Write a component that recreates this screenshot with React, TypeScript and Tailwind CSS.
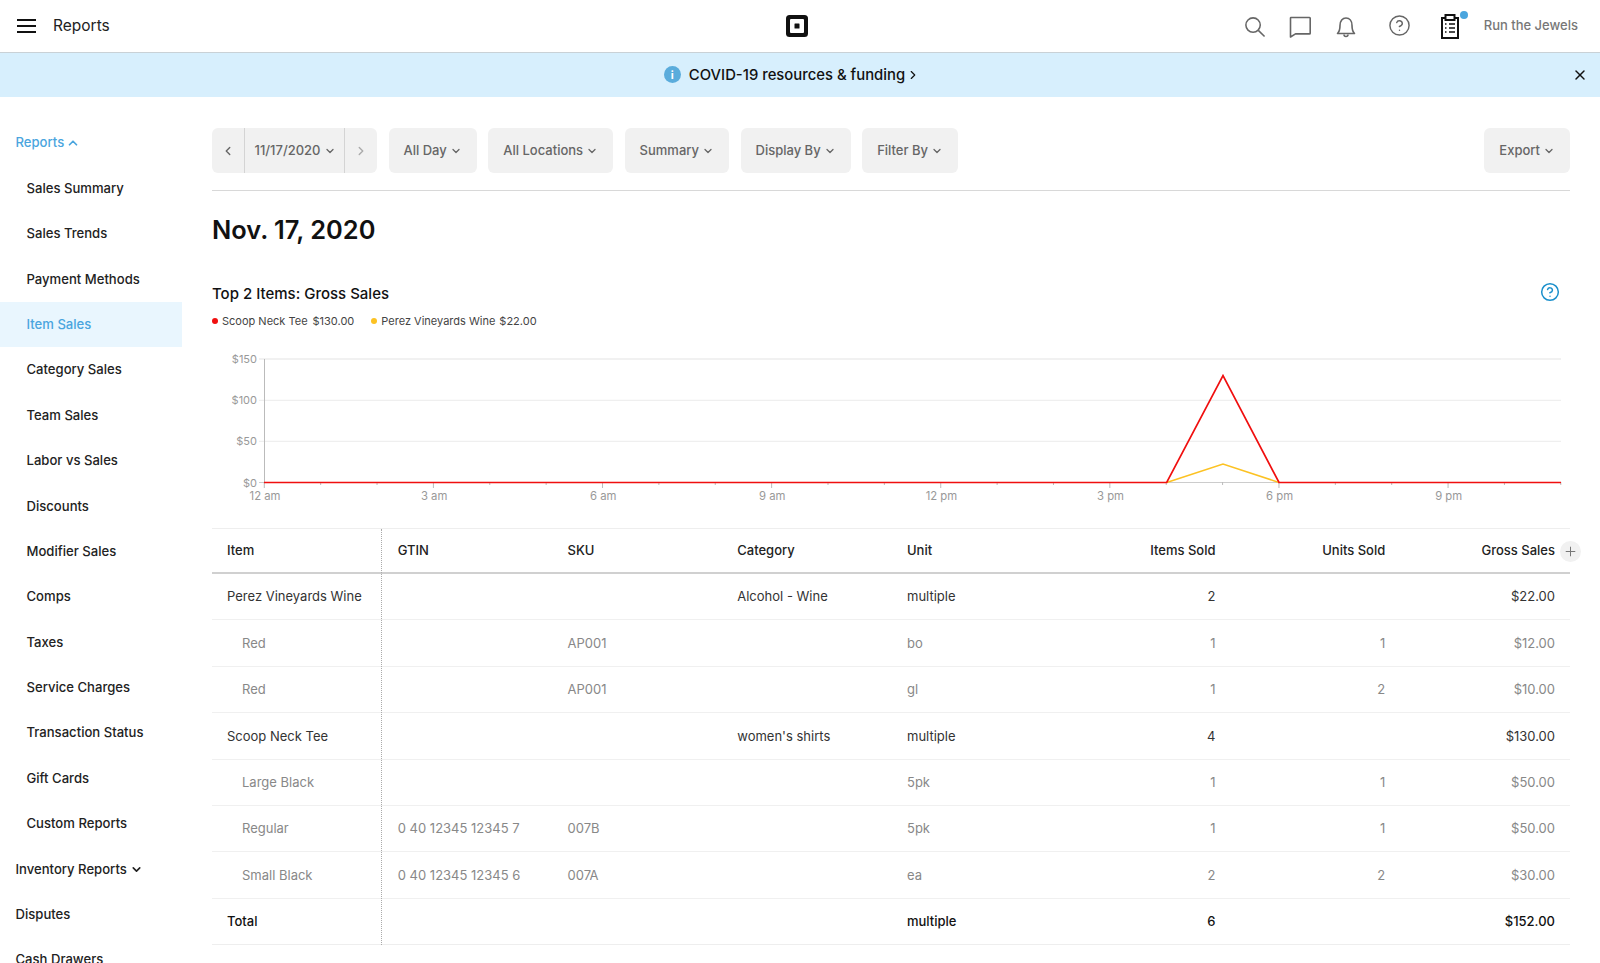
import { ChevronDown, ChevronLeft, ChevronRight, ChevronUp, CircleHelp, Plus, X } from "lucide-react";

const navItems = [
    "Sales Summary",
    "Sales Trends",
    "Payment Methods",
    "Item Sales",
    "Category Sales",
    "Team Sales",
    "Labor vs Sales",
    "Discounts",
    "Modifier Sales",
    "Comps",
    "Taxes",
    "Service Charges",
    "Transaction Status",
    "Gift Cards",
    "Custom Reports",
];

type Row = { kind: "parent" | "child" | "total"; cells: string[] };

const rows: Row[] = [
    { kind: "parent", cells: ["Perez Vineyards Wine", "", "", "Alcohol - Wine", "multiple", "2", "", "$22.00"] },
    { kind: "child", cells: ["Red", "", "AP001", "", "bo", "1", "1", "$12.00"] },
    { kind: "child", cells: ["Red", "", "AP001", "", "gl", "1", "2", "$10.00"] },
    { kind: "parent", cells: ["Scoop Neck Tee", "", "", "women's shirts", "multiple", "4", "", "$130.00"] },
    { kind: "child", cells: ["Large Black", "", "", "", "5pk", "1", "1", "$50.00"] },
    { kind: "child", cells: ["Regular", "0 40 12345 12345 7", "007B", "", "5pk", "1", "1", "$50.00"] },
    { kind: "child", cells: ["Small Black", "0 40 12345 12345 6", "007A", "", "ea", "2", "2", "$30.00"] },
    { kind: "total", cells: ["Total", "", "", "", "multiple", "6", "", "$152.00"] },
];

const columns = ["Item", "GTIN", "SKU", "Category", "Unit", "Items Sold", "Units Sold", "Gross Sales"];

function FilterButton({ label }: { label: string }) {
    return (
        <button className="h-[45px] flex items-center gap-[3px] px-[15px] rounded-md bg-[#f1f1f1] text-[13px] font-medium text-[#666]">
            {label}
            <ChevronDown size={12} strokeWidth={2.6} />
        </button>
    );
}

function Header() {
    return (
        <header className="h-[53px] grid grid-cols-[1fr_auto_1fr] items-center bg-white border-b border-[#c9d1d6]">
            <div className="flex items-center pl-[17px] gap-[17px]">
                <div className="w-[19px] flex flex-col gap-[4.5px]">
                    <span className="h-[1.5px] bg-[#111]" />
                    <span className="h-[1.5px] bg-[#111]" />
                    <span className="h-[1.5px] bg-[#111]" />
                </div>
                <span className="text-[15.5px] text-[#222]">Reports</span>
            </div>

            {/* Square logo */}
            <svg viewBox="0 0 22 22" className="w-[22px] h-[22px] -ml-[6px]">
                <rect width="22" height="22" rx="3.5" fill="#111" />
                <rect x="4" y="4" width="14" height="14" rx="1" fill="#fff" />
                <rect x="8.5" y="8.5" width="5" height="5" rx="0.5" fill="#111" />
            </svg>

            <div className="flex items-center justify-end pr-[22px] text-[#666]">
                <svg viewBox="0 0 24 24" className="w-[23px] h-[23px]" fill="none" stroke="currentColor" strokeWidth={1.6}>
                    <circle cx="10.5" cy="10.5" r="7.5" />
                    <path d="M16 16l6.5 6.5" />
                </svg>
                <svg viewBox="0 0 24 24" className="w-[24px] h-[24px] ml-[22px]" fill="none" stroke="currentColor" strokeWidth={1.6} strokeLinejoin="round">
                    <path d="M3 3.5h18.5a.7.7 0 0 1 .7.7v15a.7.7 0 0 1-.7.7H7.5L2.5 23V4a.5.5 0 0 1 .5-.5z" />
                </svg>
                <svg viewBox="0 0 24 24" className="w-[24px] h-[24px] ml-[22px]" fill="none" stroke="currentColor" strokeWidth={1.6} strokeLinejoin="round">
                    <path d="M3.5 19.5c1.8-1.8 2.5-3.5 2.5-8 0-4.5 2.5-7.5 6-7.5s6 3 6 7.5c0 4.5.7 6.2 2.5 8z" />
                    <path d="M10 20.5c0 1.3.9 2 2 2s2-.7 2-2" />
                </svg>
                <CircleHelp size={23} strokeWidth={1.5} className="ml-[30px] -mt-[2px]" />
                <div className="relative ml-[27px] w-[24px] h-[26px]">
                    <svg viewBox="0 0 24 26" className="w-[24px] h-[26px] text-[#111]" fill="none" stroke="currentColor" strokeWidth={2}>
                        <path d="M7 5H4v20h16V5h-3" />
                        <rect x="7.5" y="2" width="9" height="5" />
                        <path d="M7 11h1.5M11 11h6M7 15h1.5M11 15h6M7 19h1.5M11 19h6" strokeWidth={1.6} />
                    </svg>
                    <span className="absolute -top-[2px] right-[-6px] w-[8px] h-[8px] rounded-full bg-[#4aa5de]" />
                </div>
                <span className="ml-[22px] text-[13px] font-medium text-[#777]">Run the Jewels</span>
            </div>
        </header>
    );
}

function Banner() {
    return (
        <div className="relative h-[44px] flex items-center justify-center pr-[16px] bg-[#d7effd] text-[14.85px] text-[#111]">
            <div className="flex items-center">
                <span className="w-[17px] h-[17px] rounded-full bg-[#5aacdc] text-white text-[11px] font-bold flex items-center justify-center">i</span>
                <span className="ml-[8px] font-medium">COVID-19 resources &amp; funding</span>
                <ChevronRight size={14} strokeWidth={2} className="ml-[1px]" />
            </div>
            <X size={16} strokeWidth={2.2} className="absolute right-[12px] top-[14px]" />
        </div>
    );
}

function Sidebar() {
    return (
        <nav className="w-[181.5px] shrink-0 pt-[23.5px] text-[13.1px] font-medium text-[#222]">
            <div className="h-[45.4px] flex items-center gap-[2px] pl-[15.5px] text-[#4aa5de]">
                Reports <ChevronUp size={14} strokeWidth={3} />
            </div>
            {navItems.map((item) =>
                item === "Item Sales" ? (
                    <div key={item} className="h-[45.4px] flex items-center pl-[26.5px] bg-[#e9f6fe] text-[#4aa5de]">
                        {item}
                    </div>
                ) : (
                    <div key={item} className="h-[45.4px] flex items-center pl-[26.5px]">
                        {item}
                    </div>
                )
            )}
            <div className="h-[45.4px] flex items-center gap-[3px] pl-[15.5px]">
                Inventory Reports <ChevronDown size={13} strokeWidth={3} />
            </div>
            <div className="h-[45.4px] flex items-center pl-[15.5px]">Disputes</div>
            <div className="h-[45.4px] flex items-center pl-[15.5px]">Cash Drawers</div>
        </nav>
    );
}

function Chart() {
    const hours = Array.from({ length: 24 }, (_, i) => 264.3 + i * 56.37);
    const yTicks = [
        { y: 359, label: "$150" },
        { y: 400.3, label: "$100" },
        { y: 441.3, label: "$50" },
        { y: 482.5, label: "$0" },
    ];
    const xLabels = ["12 am", "3 am", "6 am", "9 am", "12 pm", "3 pm", "6 pm", "9 pm"];
    return (
        <svg viewBox="212 350 1358 178" className="mt-[21px] w-[1358px] h-[178px] block">
            {yTicks.map((t) => (
                <g key={t.label}>
                    <line x1="259" x2="1561" y1={t.y} y2={t.y} stroke={t.y === 482.5 ? "#ccc" : "#ececec"} strokeWidth={t.y === 359 ? 1.5 : 1} />
                    <text x="257" y={t.y + 4} textAnchor="end" fontSize="11" fill="#999">{t.label}</text>
                </g>
            ))}
            <line x1="264.5" x2="264.5" y1="359" y2="482" stroke="#bbb" />
            {hours.map((x, i) => (
                <line key={x} x1={x} x2={x} y1="482" y2={i % 3 === 0 ? 488 : 485} stroke="#bbb" />
            ))}
            {xLabels.map((label, i) => (
                <text key={label} x={265 + i * 169.1} y="499.5" textAnchor="middle" fontSize="11.3" fill="#999">{label}</text>
            ))}
            <polyline points="1166.7,482.5 1223,464 1279,482.5" fill="none" stroke="#fcc223" strokeWidth="1.6" />
            <polyline points="264,482.5 1166.7,482.5 1223,375.5 1279,482.5 1561,482.5" fill="none" stroke="#f00f0f" strokeWidth="1.7" />
        </svg>
    );
}

function ReportTable() {
    return (
        <div className="relative border-t border-[#eee]">
            {/* dotted divider after the frozen first column */}
            <div className="absolute left-[169px] top-0 bottom-0 border-l border-dotted border-[#aaa]" />
            <button className="absolute right-[-11px] top-[12px] w-[21px] h-[21px] rounded-full bg-[#f1f1f1] flex items-center justify-center text-[#777]">
                <Plus size={15} strokeWidth={1.6} />
            </button>

            <div className="grid grid-cols-8 h-[45px] items-center border-b-2 border-[#d0d0d0] text-[13px] font-medium text-[#222]">
                {columns.map((c, i) => (
                    <div key={c} className={i > 4 ? "pr-[15px] text-right" : i > 0 ? "pl-[16px]" : "pl-[15px]"}>{c}</div>
                ))}
            </div>

            {rows.map((row, r) => (
                <div
                    key={r}
                    className={
                        row.kind === "total"
                            ? "grid grid-cols-8 h-[46.4px] pt-[1px] items-center border-b border-[#eee] text-[13px] font-medium text-[#111]"
                            : row.kind === "parent"
                              ? "grid grid-cols-8 h-[46.4px] pt-[1px] items-center border-b border-[#f0f0f0] text-[13px] text-[#333]"
                              : "grid grid-cols-8 h-[46.4px] pt-[1px] items-center border-b border-[#f0f0f0] text-[13px] text-[#888]"
                    }
                >
                    {row.cells.map((cell, i) => (
                        <div
                            key={i}
                            className={
                                i > 4
                                    ? "pr-[15px] text-right"
                                    : i === 0 && row.kind === "child"
                                      ? "pl-[30px]"
                                      : i > 0
                                        ? "pl-[16px]"
                                        : "pl-[15px]"
                            }
                        >
                            {cell}
                        </div>
                    ))}
                </div>
            ))}
        </div>
    );
}

export default function App() {
    return (
        <div className="h-screen overflow-hidden bg-white font-[Inter,sans-serif]">
            <Header />
            <Banner />
            <div className="flex">
                <Sidebar />
                <main className="w-[1358px] ml-[30.5px] pt-[31px]">
                    <div className="flex gap-[11.5px] pb-[17px] border-b border-[#d8d8d8]">
                        <div className="h-[45px] flex items-center rounded-md bg-[#f1f1f1] text-[13px] font-medium text-[#666]">
                            <span className="w-[33px] h-full flex items-center justify-center border-r border-[#d4d4d4]">
                                <ChevronLeft size={14} strokeWidth={2.4} />
                            </span>
                            <span className="w-[100px] h-full flex items-center justify-center gap-[3px] pl-[1px] border-r border-[#d4d4d4]">
                                11/17/2020 <ChevronDown size={12} strokeWidth={2.6} />
                            </span>
                            <span className="w-[32px] h-full flex items-center justify-center text-[#aaa]">
                                <ChevronRight size={14} strokeWidth={2.4} />
                            </span>
                        </div>
                        <FilterButton label="All Day" />
                        <FilterButton label="All Locations" />
                        <FilterButton label="Summary" />
                        <FilterButton label="Display By" />
                        <FilterButton label="Filter By" />
                        <div className="ml-auto">
                            <FilterButton label="Export" />
                        </div>
                    </div>

                    <h1 className="mt-[21.5px] text-[25.4px] leading-[34px] font-semibold text-[#111]">Nov. 17, 2020</h1>

                    <div className="mt-[36.5px] flex items-center justify-between">
                        <h2 className="text-[15px] leading-[22px] font-medium text-[#111]">Top 2 Items: Gross Sales</h2>
                        <CircleHelp size={20} strokeWidth={1.8} className="mr-[10px] -mt-[4px] text-[#1a8fcb]" />
                    </div>

                    <div className="mt-[8px] h-[16px] flex items-center text-[11px] text-[#444]">
                        <span className="w-[6px] h-[6px] rounded-full bg-[#f00f0f]" />
                        <span className="ml-[4px]">Scoop Neck Tee</span>
                        <span className="ml-[5px]">$130.00</span>
                        <span className="ml-[17px] w-[6px] h-[6px] rounded-full bg-[#fcc223]" />
                        <span className="ml-[4px]">Perez Vineyards Wine</span>
                        <span className="ml-[4px]">$22.00</span>
                    </div>

                    <Chart />
                    <ReportTable />
                </main>
            </div>
        </div>
    );
}
